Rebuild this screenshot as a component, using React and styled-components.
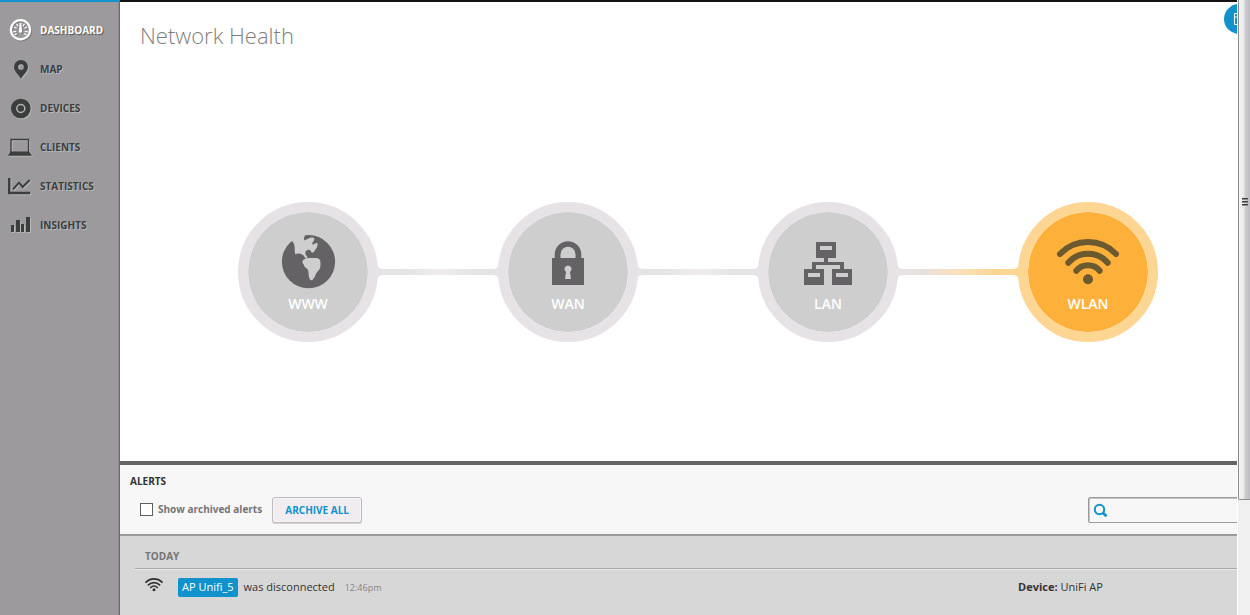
import { useState } from "react";
import styled, { createGlobalStyle, css } from "styled-components";

const GlobalStyle = createGlobalStyle`
    * {
        box-sizing: border-box;
    }

    body {
        margin: 0;
        background: #ffffff;
        color: #333333;
        font-family: "Open Sans", "Noto Sans", sans-serif;
        font-size: 11px;
    }
`;

const Page = styled.div`
    display: flex;
    min-height: 100vh;
`;

const Sidebar = styled.nav`
    flex: 0 0 120px;
    padding-top: 9px;
    border-top: 2px solid #1192cc;
    border-right: 1px solid #6c6c6c;
    background: #9d9a9d;
    box-shadow: inset -1px 0 0 #8c8a8c;
`;

const NavLink = styled.a`
    display: flex;
    align-items: center;
    gap: 8px;
    height: 39px;
    padding: 0 0 2px 8px;
    color: #3c3e3d;
    font-size: 10px;
    font-weight: 700;
    text-decoration: none;
    text-shadow: 1px 1px 0 #b3b8ba;

    svg {
        filter: drop-shadow(1px 1px 0 #b3b8ba);
    }

    ${({ $active }) =>
        $active &&
        css`
            color: #ffffff;
            text-shadow: 1px 1px 1px #555555;

            svg {
                filter: drop-shadow(1px 1px 0 #7c7c7c);
            }
        `};
`;

const Main = styled.main`
    position: relative;
    display: flex;
    flex: 1;
    flex-direction: column;
    min-width: 0;
    overflow: hidden;
    border-top: 2px solid #141214;
`;

const PanelButton = styled.button`
    position: absolute;
    top: 2px;
    right: -17px;
    display: flex;
    align-items: center;
    width: 30px;
    height: 30px;
    padding: 0 0 0 8px;
    border: 0;
    border-radius: 50%;
    background: #1192cc;
    color: #ffffff;
`;

const Health = styled.section`
    display: flex;
    flex: 1;
    flex-direction: column;
`;

const Title = styled.h1`
    margin: 0;
    padding: 18px 20px 32px;
    color: #7f7f7f;
    font-size: 22px;
    font-weight: 300;
    line-height: 30px;
`;

const Chain = styled.div`
    display: flex;
    flex: 1;
    align-items: center;
    justify-content: center;
    padding-left: 39px;
`;

const Node = styled.div`
    display: flex;
    flex: 0 0 140px;
    flex-direction: column;
    align-items: center;
    height: 140px;
    padding-top: 22px;
    border: 10px solid ${({ $warning }) => ($warning ? "#fed694" : "#e6e2e6")};
    border-radius: 50%;
    background: ${({ $warning }) => ($warning ? "#feb13a" : "#cecece")};
    background-clip: padding-box;
    color: ${({ $warning }) => ($warning ? "#6b5930" : "#656266")};
`;

const NodeLabel = styled.span`
    margin-top: 5px;
    color: #ffffff;
    font-size: 14px;
    font-weight: 600;
    line-height: 18px;
`;

const LinkShape = styled.svg`
    flex: 0 0 128px;
    height: 16px;
    margin: 0 -4px;
`;

const Alerts = styled.section`
    border-top: 4px solid #656565;
    background: #d7d7d7;
`;

const AlertsHeader = styled.header`
    padding: 8px 0 11px 10px;
    border-bottom: 2px solid #9b9b9b;
    background: #f7f7f7;
`;

const AlertsTitle = styled.h2`
    margin: 0 0 8px;
    font-size: 10px;
    font-weight: 700;
    line-height: 16px;
`;

const Toolbar = styled.div`
    display: flex;
    align-items: center;
    height: 26px;
    padding-left: 10px;
`;

const CheckLabel = styled.label`
    display: flex;
    align-items: center;
    gap: 5px;
    padding-bottom: 2px;
    color: #757575;
    font-size: 10px;
    font-weight: 700;
`;

const Checkbox = styled.input`
    appearance: none;
    width: 13px;
    height: 13px;
    margin: 0;
    border: 1px solid #5e5e5e;
    background: #ffffff;

    &:checked {
        background: #1192cc;
        box-shadow: inset 0 0 0 2px #ffffff;
    }
`;

const Button = styled.button`
    width: 90px;
    height: 26px;
    margin-left: 10px;
    padding: 0;
    border: 1px solid #bdbabd;
    border-radius: 3px;
    background: #f0ecf0;
    box-shadow: inset 0 0 0 1px #f8f6f8, 0 1px 0 #d6d3d6;
    color: #1192cc;
    font-family: inherit;
    font-size: 10px;
    font-weight: 700;
`;

const SearchBox = styled.label`
    display: flex;
    align-items: center;
    width: 160px;
    height: 26px;
    margin: 0 -11px 0 auto;
    padding-left: 4px;
    border: 1px solid #9b9b9b;
    border-radius: 2px;
    box-shadow: inset 1px 1px 0 #c4c4c4;
    color: #1192cc;
`;

const SearchInput = styled.input`
    flex: 1;
    min-width: 0;
    margin-left: 6px;
    border: 0;
    outline: none;
    background: transparent;
    font-family: inherit;
    font-size: 11px;
`;

const AlertList = styled.div`
    padding: 13px 0 18px 15px;
`;

const Day = styled.h3`
    margin: 0;
    padding: 0 10px 5px;
    border-bottom: 1px solid #a9a9a9;
    box-shadow: 0 1px 0 #e9e9e9;
    color: #757575;
    font-size: 10px;
    font-weight: 700;
    line-height: 14px;
`;

const AlertRow = styled.div`
    display: flex;
    align-items: flex-start;
    height: 19px;
    margin-top: 9px;
    padding-left: 10px;
    line-height: 17px;
`;

const DeviceTag = styled.a`
    margin: 0 6px 0 15px;
    padding: 0 4px 2px;
    border-radius: 2px;
    background: #1192cc;
    color: #ffffff;
    text-decoration: none;
`;

const Time = styled.time`
    margin-left: 10px;
    color: #858585;
    font-size: 9px;
    line-height: 19px;
`;

const Device = styled.span`
    flex: 0 0 219px;
    margin-left: auto;
`;

const ScrollTrack = styled.div`
    flex: 0 0 13px;
    padding-left: 1px;
    background: linear-gradient(90deg, #ffffff 1px, #f0f0f0 1px);
`;

const ScrollThumb = styled.div`
    height: 500px;
    padding: 198px 0 0 3px;
    border: solid #8c8c8c;
    border-width: 0 0 1px 1px;
    border-bottom-left-radius: 2px;
    background: linear-gradient(90deg, #f6f6f6 0%, #e8e8ea 45%, #cdcdd1 55%, #bebec2 100%);
`;

const Grip = styled.div`
    width: 6px;
    height: 2px;
    margin-bottom: 1px;
    border-top: 1px solid #3c3c3c;
    border-bottom: 1px solid #8e8e8e;
`;

const navIcons = {
    dashboard: (
        <>
            <circle cx="12.5" cy="10.8" r="9.6" fill="none" stroke="currentColor" strokeWidth="2.2" />
            <path
                d="M5.2 12.8l3-.5M6 8l2.6 1.2M8.5 4.9l1.6 2.3M16.5 4.9l-1.6 2.3M19 8l-2.6 1.2M19.8 12.8l-3-.5M6.5 15.8l2.3-1.2M18.5 15.8l-2.3-1.2"
                stroke="currentColor"
                strokeWidth="1.2"
            />
            <path d="M11.700 4h1.600l.8 8.200a1.600 1.600 0 0 1-3.200 0z" fill="currentColor" />
        </>
    ),
    map: (
        <path
            fillRule="evenodd"
            fill="currentColor"
            d="M13 2a7 7 0 0 0-7 7c0 4.400 4.500 7.600 7 11.700C15.500 16.600 20 13.400 20 9a7 7 0 0 0-7-7zm0 4.200a2.900 2.900 0 1 1 0 5.800a2.900 2.900 0 0 1 0-5.800z"
        />
    ),
    devices: (
        <>
            <circle cx="12.8" cy="11.5" r="9.8" fill="currentColor" />
            <circle cx="12.8" cy="11.5" r="4" fill="none" stroke="#b3b4b4" strokeWidth="1.5" />
        </>
    ),
    clients: (
        <>
            <path d="M3 16V3.500h17.500V16" fill="none" stroke="currentColor" strokeWidth="1.300" />
            <path d="M2.500 15.500h18.500l3 4.200H0z" fill="currentColor" />
        </>
    ),
    statistics: (
        <>
            <path d="M1.200 3v15h21" fill="none" stroke="currentColor" strokeWidth="2.400" />
            <path d="M5 14.300l6-6.600 3.700 4.300 7-7" fill="none" stroke="currentColor" strokeWidth="2" />
        </>
    ),
    insights: <path d="M3 11h3v7H3zM8 6h4v12H8zM13 10h3v8h-3zM18 3h4v15h-4z" fill="currentColor" />,
};

const nodeIcons = {
    www: (
        <>
            <circle cx="32.5" cy="27.700" r="26.600" fill="currentColor" />
            <path
                fill="#cecece"
                d="M16 7C18.500 9 18.700 12 18.700 16c0 2 .2 3.500.6 4.300C21 19.300 23 19.300 24.500 19.800c2 .8 3.700 1.500 4 3.400l1.700 1.300 1.500-1.500C28.800 21 28.800 17.500 30.500 16.500c1.500-1 3.500-.8 4.200.5.600 1.200 1.500 1.800 2.600 1.500C38.800 18 38 16.500 39.500 15.500 40.500 14.500 41.800 12 41.500 9.500 40 8 38.500 11 36 10.300 36 8.500 38.500 7 38.300 4.700 37.500 3 34.500 3.200 32.500 4.500 31 5.500 29.500 5.500 28.600 6.600 27.500 5 28 3 29.500.5L24-3 14 3z"
            />
            <path
                fill="#cecece"
                d="M26.700 26.700C27.500 25 29.500 24.600 31.300 24h9c3 .2 4.200 2 4.200 4.500 0 3.500 0 6-1.800 7.800C40 38.500 39.500 42 37.300 45c-1.300 1.800-3 1.500-3.700-.3C32 41.500 33 38.500 32 36c-1-2-3.500-2.700-4-4.500-.3-2-2.300-2.500-1.300-4.800z"
            />
        </>
    ),
    wan: (
        <>
            <path d="M21.600 25v-4.600a10.400 10.400 0 0 1 20.800 0V25" fill="none" stroke="currentColor" strokeWidth="5.700" />
            <path d="M16 24h32v27H16z" fill="currentColor" />
            <path
                fill="#cecece"
                d="M32 31.500a3.600 3.600 0 0 1 2 6.600L35 45h-6l1-6.900a3.600 3.600 0 0 1 2-6.600z"
            />
        </>
    ),
    lan: (
        <path
            fillRule="evenodd"
            fill="currentColor"
            d="M20 8h20v16h-8v4h16v7h8v16H36V35h8v-4H20v4h8v16H8V35h8v-7h12v-4h-8zM24 12v4h12v-4zM12 39v4h12v-4zM40 39v4h12v-4z"
        />
    ),
    wlan: (
        <>
            <path
                d="M4 20a38.700 38.700 0 0 1 56 0M12.300 28.700a26 26 0 0 1 39.400 0M20.300 36.700a15.400 15.400 0 0 1 23.400 0"
                fill="none"
                stroke="currentColor"
                strokeWidth="6"
                strokeLinecap="round"
            />
            <circle cx="32" cy="45.300" r="5" fill="currentColor" />
        </>
    ),
};

const navItems = [
    { id: "dashboard", label: "DASHBOARD" },
    { id: "map", label: "MAP" },
    { id: "devices", label: "DEVICES" },
    { id: "clients", label: "CLIENTS" },
    { id: "statistics", label: "STATISTICS" },
    { id: "insights", label: "INSIGHTS" },
];

const linkColors = {
    idle: ["#e6e2e6", "#e4e5e4", "#f0ecef", "#e4e5e4", "#e6e2e6"],
    warning: ["#e6e2e6", "#e9e1d8", "#fae1bd", "#fed694", "#fed694"],
};

const NavIcon = ({ name }) => (
    <svg width="24" height="23" viewBox="0 -1 24 23" overflow="visible" aria-hidden="true">
        {navIcons[name]}
    </svg>
);

const HealthNode = ({ name, label, warning }) => (
    <Node $warning={warning}>
        <svg width="64" height="56" viewBox="0 0 64 56" aria-hidden="true">
            {nodeIcons[name]}
        </svg>
        <NodeLabel>{label}</NodeLabel>
    </Node>
);

const HealthLink = ({ id, status = "idle" }) => (
    <LinkShape viewBox="0 0 128 16" aria-hidden="true">
        <defs>
            <linearGradient id={id}>
                {linkColors[status].map((color, i) => (
                    <stop key={i} offset={[0.05, 0.25, 0.5, 0.8, 0.95][i]} stopColor={color} />
                ))}
            </linearGradient>
        </defs>
        <path
            fill={`url(#${id})`}
            d="M3 1c1 2.500 3 4 6 4h110c3 0 5-1.500 6-4v14c-1-2.500-3-4-6-4H9c-3 0-5 1.500-6 4z"
        />
    </LinkShape>
);

const App = () => {
    const [active, setActive] = useState("dashboard");
    const [showArchived, setShowArchived] = useState(false);
    const [search, setSearch] = useState("");

    return (
        <>
            <GlobalStyle />
            <Page>
                <Sidebar>
                    {navItems.map(({ id, label }) => (
                        <NavLink
                            key={id}
                            href={`#${id}`}
                            $active={active === id}
                            onClick={() => setActive(id)}
                        >
                            <NavIcon name={id} />
                            {label}
                        </NavLink>
                    ))}
                </Sidebar>
                <Main>
                    <Health>
                        <Title>Network Health</Title>
                        <Chain>
                            <HealthNode name="www" label="WWW" />
                            <HealthLink id="link-www" />
                            <HealthNode name="wan" label="WAN" />
                            <HealthLink id="link-wan" />
                            <HealthNode name="lan" label="LAN" />
                            <HealthLink id="link-lan" status="warning" />
                            <HealthNode name="wlan" label="WLAN" warning />
                        </Chain>
                    </Health>
                    <PanelButton type="button" aria-label="Open panel">
                        <svg width="14" height="14" viewBox="0 0 14 14" fill="none" stroke="currentColor">
                            <path d="M2.500 1.500h10v11h-10zM2.500 5h10M5.500 5v7.500" />
                        </svg>
                    </PanelButton>
                    <Alerts>
                        <AlertsHeader>
                            <AlertsTitle>ALERTS</AlertsTitle>
                            <Toolbar>
                                <CheckLabel>
                                    <Checkbox
                                        type="checkbox"
                                        checked={showArchived}
                                        onChange={(e) => setShowArchived(e.target.checked)}
                                    />
                                    Show archived alerts
                                </CheckLabel>
                                <Button type="button">ARCHIVE ALL</Button>
                                <SearchBox>
                                    <svg width="15" height="15" viewBox="0 0 15 15" fill="none" stroke="currentColor">
                                        <circle cx="6.500" cy="6.500" r="4.700" strokeWidth="2" />
                                        <path d="M9.800 9.800l3.700 3.400" strokeWidth="2.800" />
                                    </svg>
                                    <SearchInput
                                        type="text"
                                        aria-label="Search alerts"
                                        value={search}
                                        onChange={(e) => setSearch(e.target.value)}
                                    />
                                </SearchBox>
                            </Toolbar>
                        </AlertsHeader>
                        <AlertList>
                            <Day>TODAY</Day>
                            <AlertRow>
                                <svg width="18" height="19" viewBox="0 1 18 19" fill="none" stroke="#333333" aria-hidden="true">
                                    <path
                                        d="M1 5.200a11.500 11.500 0 0 1 16 0M3.400 7.900a8 8 0 0 1 11.200 0M5.700 10.500a4.800 4.800 0 0 1 6.600 0"
                                        strokeWidth="1.700"
                                        strokeLinecap="round"
                                    />
                                    <circle cx="9" cy="12.800" r="1.500" fill="#333333" stroke="none" />
                                </svg>
                                <DeviceTag href="#ap-unifi-5">AP Unifi_5</DeviceTag>
                                was disconnected
                                <Time>12:46pm</Time>
                                <Device>
                                    <b>Device:</b> UniFi AP
                                </Device>
                            </AlertRow>
                        </AlertList>
                    </Alerts>
                </Main>
                <ScrollTrack>
                    <ScrollThumb>
                        <Grip />
                        <Grip />
                        <Grip />
                    </ScrollThumb>
                </ScrollTrack>
            </Page>
        </>
    );
};

export default App;
